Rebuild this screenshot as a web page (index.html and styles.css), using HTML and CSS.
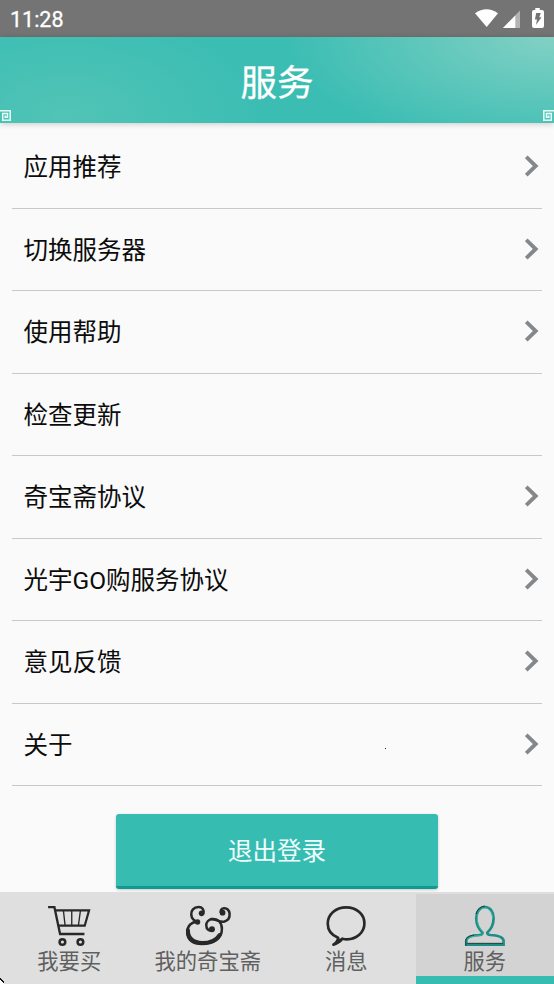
FILE: index.html
```html
<!DOCTYPE html>
<html lang="zh-CN">
<head>
<meta charset="utf-8">
<title>服务</title>
<link rel="stylesheet" href="styles.css">
</head>
<body>
<svg class="defs" width="0" height="0" aria-hidden="true">
  <symbol id="chevron" viewBox="0 0 14 22"><path d="M1.2 1.8 10.7 11 1.2 20.2" fill="none" stroke="#85888b" stroke-width="3.9"/></symbol>
  <symbol id="fret" viewBox="0 0 11 11"><path d="M0 .8H10.2V10.2H2.7V3.6H7.5V7.3H5.2V5.4" fill="none" stroke="#e9fffb" stroke-width="1.5"/></symbol>
</svg>
<div class="screen">
  <div class="status">
    <span class="clock">11:28</span>
    <svg class="status-icons" viewBox="0 0 72 22" width="72" height="22">
      <path d="M0 5.2Q11.5-2.9 23 5.2L11.7 19Z" fill="#fff"/>
      <path d="M28 20 45 2.500V20Z" fill="#b4b4b4"/>
      <path d="M28 20 40.3 7.400V20Z" fill="#fff"/>
      <path d="M60.300 0h4.500v2H67q2 0 2 2v14q0 2-2 2h-8q-2 0-2-2V4q0-2 2-2h1.300Z" fill="#fff"/>
      <path d="M61.200 5h4.600l-1.500 4.300h2.200L61 17l1-5.500h-2.100Z" fill="#747474"/>
    </svg>
  </div>
  <header class="header">
    <svg class="fret fret-left"><use href="#fret"/></svg>
    <h1>服务</h1>
    <svg class="fret fret-right"><use href="#fret"/></svg>
  </header>
  <main>
    <ul class="menu">
      <li><span>应用推荐</span><svg class="chevron"><use href="#chevron"/></svg></li>
      <li><span>切换服务器</span><svg class="chevron"><use href="#chevron"/></svg></li>
      <li><span>使用帮助</span><svg class="chevron"><use href="#chevron"/></svg></li>
      <li><span>检查更新</span></li>
      <li><span>奇宝斋协议</span><svg class="chevron"><use href="#chevron"/></svg></li>
      <li><span>光宇GO购服务协议</span><svg class="chevron"><use href="#chevron"/></svg></li>
      <li><span>意见反馈</span><svg class="chevron"><use href="#chevron"/></svg></li>
      <li><span>关于</span><i class="speck"></i><svg class="chevron"><use href="#chevron"/></svg></li>
    </ul>
    <button class="logout">退出登录</button>
  </main>
  <nav class="tabs">
    <a class="tab">
      <svg class="icon" viewBox="117.75 42 180 132">
        <g fill="none" stroke="#282828">
          <path d="M145 51.500H164L181 132H254" stroke-width="7"/>
          <path d="M168 61H268L255 107H176" stroke-width="6.500"/>
          <path d="M191 62 196 106M216 62V106M242 62 236 106" stroke-width="4"/>
          <circle cx="188" cy="156" r="8.500" stroke-width="7.500"/>
          <circle cx="242" cy="156" r="8.500" stroke-width="7.500"/>
        </g>
      </svg>
      <span>我要买</span>
    </a>
    <a class="tab">
      <svg class="icon" viewBox="113.25 42 180 132">
        <g fill="none" stroke="#282828" stroke-linecap="round" stroke-linejoin="round">
          <path d="M189 70C192 58 186 51 175 51C160 51 152 62 153 74C154 86 161 93 173 95" stroke-width="7.500"/>
          <path d="M172 95C153 95 141 108 141 127C141 150 158 162 185 162C219 162 245 147 245 117C245 98 234 86 217 87C205 88 198 96 198 106C198 119 207 124 216 120" stroke-width="7.500"/>
          <path d="M143 121C143 148 160 158 186 159C211 159 229 149 238 135" stroke-width="12"/>
          <path d="M213 87C231 88 237 97 251 95C264 92 269 82 268 71C267 60 260 54 251 55C242 56 239 63 243 70" stroke-width="7.500"/>
        </g>
        <g fill="#282828"><circle cx="184" cy="70" r="8.500"/><circle cx="172" cy="96" r="8"/><circle cx="215" cy="118" r="9"/><circle cx="247" cy="68" r="8.500"/></g>
      </svg>
      <span>我的奇宝斋</span>
    </a>
    <a class="tab">
      <svg class="icon" viewBox="108.75 42 180 132">
        <path d="M175 143C155 135 144 119 144 101C144 73 168 52 199 52C231 52 254 73 254 100C254 128 230 148 202 148Q195 148 188 146Q179 158 161 164Q175 154 175 143Z" fill="none" stroke="#282828" stroke-width="8" stroke-linejoin="round"/>
        <path d="M158 165Q173 158 176 145L188 148Q178 160 158 165Z" fill="#282828"/>
      </svg>
      <span>消息</span>
    </a>
    <a class="tab active">
      <svg class="icon" viewBox="134.25 42 180 132">
        <path d="M168 164V153C168 139 190 136 207 135Q217 134 217 128C207 119 198 102 198 85C198 65 209 51 224 51C239 51 250 65 250 85C250 102 241 119 231 128Q231 134 241 135C258 136 280 139 280 153V164Z" fill="none" stroke="#1e8d85" stroke-width="8"/>
        <path d="M170 159V153C170 141 192 138 210 137Q220 134 220 127C210 119 201 102 201 85C201 67 211 54 224 54C237 54 247 67 247 85" fill="none" stroke="#47b8ad" stroke-width="2.500"/>
        <path d="M167 167V152C167 142 177 137 192 135M171 160H278M197 72Q204 50 224 48" fill="none" stroke="#213c3c" stroke-width="3"/>
      </svg>
      <span>服务</span>
    </a>
  </nav>
  <svg class="corner" viewBox="0 0 5 6" width="5" height="6"><path d="M0 1 4 5V6H0Z" fill="#fff"/><path d="M0 0h1v1h1v1h1v1h1v2H3V4H2V3H1V2H0Z" fill="#111"/></svg>
</div>
</body>
</html>
```
FILE: styles.css
```css
* { box-sizing: border-box; }
body {
  margin: 0;
  background: #fafafa;
  color: #0c0c0c;
  font-family: Roboto, "Noto Sans CJK SC", sans-serif;
}
.defs { position: absolute; }
.screen {
  position: relative;
  display: flex;
  flex-direction: column;
  width: 554px;
  height: 984px;
  overflow: hidden;
}
.status {
  display: flex;
  justify-content: space-between;
  height: 37px;
  padding: 8px 7px 0 10px;
  background: #747474;
  color: #fff;
}
.clock {
  font-size: 21.5px;
  line-height: 23px;
  font-weight: 400;
  -webkit-text-stroke: .3px #fff;
}
.status-icons { width: 72px; }
.header {
  position: relative;
  display: flex;
  align-items: flex-end;
  justify-content: space-between;
  height: 86px;
  background:
    radial-gradient(ellipse 270px 115px at 100% 0, rgba(143, 212, 199, .85), rgba(143, 212, 199, 0)),
    radial-gradient(ellipse 200px 110px at 12% 90%, rgba(90, 199, 183, .7), rgba(90, 199, 183, 0)),
    #3bbdb3;
  box-shadow: 0 1px 6px rgba(0, 0, 0, .2);
}
h1 {
  align-self: center;
  margin: 0;
  padding-top: 7px;
  color: #fff;
  font-size: 36.5px;
  line-height: 79px;
  font-weight: 400;
  -webkit-text-stroke: .3px #fff;
}
.fret { width: 11px; height: 11px; margin-bottom: 2px; }
.fret-right { transform: scaleX(-1); }
main {
  display: flex;
  flex: 1;
  flex-direction: column;
  align-items: center;
  padding-top: 3px;
}
.menu { width: 530px; margin: 0; padding: 0; list-style: none; }
.menu li {
  display: flex;
  align-items: center;
  justify-content: space-between;
  height: 82.5px;
  padding: 0 3px 0 11.5px;
  border-bottom: 1.5px solid #c8c8c8;
  font-size: 24.5px;
  line-height: 36px;
}
.menu span { padding-top: 3px; }
.chevron { width: 14px; height: 22px; margin-bottom: 1px; }
.speck { width: 1px; height: 1px; margin: 9px 0 0 173px; background: #222; }
.logout {
  width: 322px;
  height: 75px;
  margin: 28px 0 0;
  padding: 4px 0 0;
  border: 0;
  border-bottom: 3px solid #12998f;
  border-radius: 3px;
  background: #37bcb2;
  box-shadow: 0 1px 3px rgba(0, 0, 0, .2);
  color: #f0fffd;
  font: 24.5px/36px Roboto, "Noto Sans CJK SC", sans-serif;
}
.tabs {
  display: grid;
  grid-template-columns: repeat(4, 1fr);
  height: 92px;
  padding-bottom: 1px;
  background: #dfdfdf;
}
.tab {
  display: flex;
  flex-direction: column;
  align-items: center;
  padding-top: 12px;
  color: #606060;
  font-size: 21.3px;
  line-height: 28px;
}
.icon { width: 60px; height: 44px; }
.tab.active {
  border-bottom: 8px solid #37bcb2;
  background: linear-gradient(#dfdfdf 2px, #d3d3d3 2px);
}
.corner { position: absolute; left: 0; bottom: 0; }
```
